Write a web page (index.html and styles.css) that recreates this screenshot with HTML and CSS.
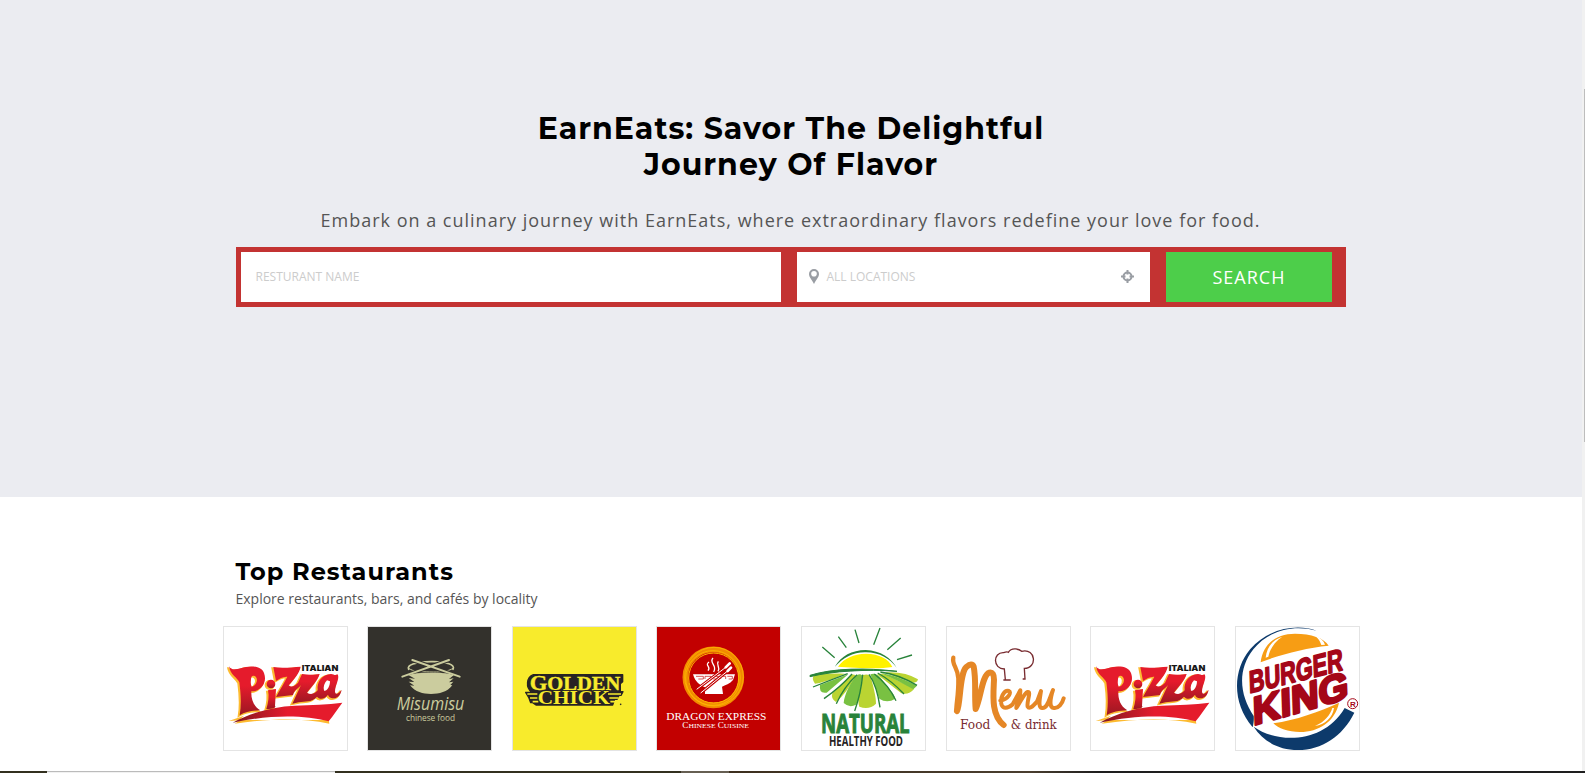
FILE: index.html
```
<!DOCTYPE html>
<html lang="en">
<head>
<meta charset="utf-8">
<title>EarnEats</title>
<link rel="stylesheet" href="styles.css">
</head>
<body>
<svg width="0" height="0" class="defs" aria-hidden="true">
  <defs>
    <linearGradient id="red" x1="0" y1="0" x2="0" y2="1"><stop offset="0.4" stop-color="#e51b2c"/><stop offset="1" stop-color="#9b1722"/></linearGradient>
    <linearGradient id="swoosh" x1="0" y1="0" x2="1" y2="0"><stop offset="0" stop-color="#7d1620"/><stop offset="0.5" stop-color="#e51b2c"/></linearGradient>
    <g id="pizza-shape">
      <path fill-rule="evenodd" d="M43 154C50 166 62 164 78 160C104 151 140 151 148 174C160 206 134 231 110 229C109 252 116 274 137 286C112 287 92 290 75 301C81 267 78 231 74 202C68 187 47 181 43 154ZM110 186C108 197 107 207 111 215C126 212 131 193 123 185C119 181 113 182 110 186Z"/>
      <path d="M160 226L184 222L181 272C186 278 176 281 155 282C161 262 164 244 160 226Z"/>
      <circle cx="169" cy="207" r="13"/>
      <path d="M176 156C202 161 230 157 258 155C254 175 240 190 222 211C230 218 240 214 250 203L262 177C283 181 301 179 315 177C309 197 290 216 277 233C288 240 300 237 309 226C306 199 323 178 349 177C358 178 361 183 369 178C376 192 361 211 361 230C363 241 371 237 381 224C377 244 366 252 350 249C344 247 341 243 340 239C330 254 314 254 307 245C290 264 272 257 252 262L233 266L259 210C252 220 239 224 235 240L184 246C195 225 209 204 218 185C205 184 195 191 184 198Z"/>
    </g>
    <symbol id="pizza" viewBox="28 36 369 369">
      <use href="#pizza-shape" fill="#fdbb30" stroke="#fdbb30" stroke-width="4" transform="translate(-4 3)"/>
      <path d="M42 318L88 302L75 315L342 315L344 326C260 308 170 310 60 326L76 316Z" fill="#fdbb30"/>
      <use href="#pizza-shape" fill="url(#red)"/>
      <path d="M54 323C110 292 176 275 240 272C290 269 338 270 383 263C369 281 356 302 342 319C270 300 170 298 54 323Z" fill="url(#swoosh)"/>
      <path d="M337 196C329 204 325 216 328 227C338 230 346 212 346 199Z" fill="#fff"/>
      <text x="261" y="168" class="heavy" font-size="22" textLength="110" lengthAdjust="spacingAndGlyphs" fill="#181818">ITALIAN</text>
    </symbol>
  </defs>
</svg>

<section class="hero">
  <h1 class="hero-title">EarnEats: Savor The Delightful<br>Journey Of Flavor</h1>
  <p class="hero-text">Embark on a culinary journey with EarnEats, where extraordinary flavors redefine your love for food.</p>
  <form class="search">
    <div class="field field-name">RESTURANT NAME</div>
    <div class="field field-location">
      <svg class="pin" viewBox="0 0 10 15"><path fill-rule="evenodd" d="M5 0A5 5 0 0 1 10 5C10 8 7.500 10 5 15C2.500 10 0 8 0 5A5 5 0 0 1 5 0ZM5 2A2.800 2.800 0 1 0 5 7.600A2.800 2.800 0 0 0 5 2Z"/></svg>
      <span class="location-text">ALL LOCATIONS</span>
      <svg class="target" viewBox="0 0 13 13"><circle cx="6.500" cy="6.500" r="4" fill="none" stroke="#999da3" stroke-width="2"/><path d="M5.500 0H7.500V4.500H5.500ZM5.500 8.500H7.500V13H5.500ZM0 5.500H4.500V7.500H0ZM8.500 5.500H13V7.500H8.500Z"/></svg>
    </div>
    <button type="button" class="search-button">SEARCH</button>
  </form>
</section>

<section class="restaurants">
  <h2 class="section-title">Top Restaurants</h2>
  <p class="section-text">Explore restaurants, bars, and cafés by locality</p>
  <div class="cards">
    <div class="card"><svg class="logo"><use href="#pizza"/></svg></div>

    <div class="card dark"><svg class="logo" viewBox="461 36 369 369">
      <g fill="none" stroke="#cbcc9e" stroke-width="4" stroke-linecap="round">
        <path d="M583 163C576 150 602 141 650 140S724 150 716 163" stroke-width="5"/>
        <path d="M583 160C598 171 617 170 646 171S702 170 716 160" stroke-width="3"/>
        <path d="M564 185L704 135M736 185L594 135" stroke="#33312c" stroke-width="12"/>
        <path d="M564 185L704 135M736 185L594 135" stroke-width="6"/>
      </g>
      <path d="M582 180C605 173 625 174 650 174S700 173 718 181L704 192L718 190L704 202L717 200L708 210L714 211C699 231 675 237 650 237S603 231 587 211L600 212L583 200L600 201L583 189L602 191Z" fill="#cbcc9e"/>
      <text x="547" y="285" class="hand" font-size="54" textLength="203" lengthAdjust="spacingAndGlyphs" fill="#cbcc9e">Misumisu</text>
      <text x="575" y="318" class="hand-small" font-size="25" textLength="147" fill="#cbcc9e">chinese food</text>
    </svg></div>

    <div class="card yellow"><svg class="logo" viewBox="25 36 369 369">
      <path d="M86 179H354V200L347 206V230H355L349 241H343L337 253H330L324 270H94L84 263H78L72 247L63 232H82C61 218 66 186 86 179Z" fill="#272324" stroke="#272324" stroke-width="4" stroke-linejoin="round"/>
      <g stroke="#f8eb2c" stroke-width="5"><path d="M68 237H98M76 249H98M84 260H101M310 237H349M314 249H342M317 260H334"/></g>
      <text x="75" y="224" class="serif" font-size="62" textLength="272" lengthAdjust="spacingAndGlyphs" fill="#f8eb2c" stroke="#f8eb2c">G<tspan font-size="56">OLDEN</tspan></text>
      <text x="99" y="267" class="serif" font-size="57" textLength="216" lengthAdjust="spacingAndGlyphs" fill="#f8eb2c" stroke="#272324" stroke-width="5" paint-order="stroke">CHICK</text>
      <circle cx="348" cy="268" r="2.500" fill="#272324"/>
    </svg></div>

    <div class="card crimson"><svg class="logo" viewBox="458 36 369 369">
      <g fill="none" stroke="#f18a00"><circle cx="627" cy="187" r="84" stroke-width="17"/><g stroke="#ffc000" stroke-width="2"><circle cx="629" cy="185" r="88"/><circle cx="626" cy="189" r="82"/></g><circle cx="628" cy="189" r="75" stroke="#ffb900" stroke-width="3"/></g>
      <path d="M566 178H692L686 195C677 206 662 211 653 215L656 237H602V217C587 211 573 202 566 178Z" fill="#fff"/>
      <path d="M575 184H597V192H582M602 192V184H620V192M626 184H642V192H627M649 192V184H664V192M669 184H684V192H673" fill="none" stroke="#c20000" stroke-width="2"/>
      <path d="M577 223L680 145M589 234L682 158" stroke="#c20000" stroke-width="9"/>
      <path d="M577 223L680 145M589 234L682 158" stroke="#fff" stroke-width="3"/>
      <path d="M664 157L676 145M670 168L680 158" stroke="#fff" stroke-width="8" stroke-linecap="round"/>
      <path d="M614 141C599 152 622 154 611 167M626 129C612 143 641 151 628 171M642 139C633 151 650 155 641 169" fill="none" stroke="#fff" stroke-width="4"/>
      <text x="486" y="315" class="roman" font-size="34" textLength="300" lengthAdjust="spacingAndGlyphs" fill="#fff">DRAGON EXPRESS</text>
      <text x="534" y="340" class="roman" font-size="25" textLength="200" lengthAdjust="spacingAndGlyphs" fill="#fff">C<tspan font-size="21">HINESE </tspan>C<tspan font-size="21">UISINE</tspan></text>
    </svg></div>

    <div class="card"><svg class="logo" viewBox="21 36 369 369">
      <g fill="none" stroke="#28833a" stroke-width="4"><path d="M82 96L119 128M130 65L154 98M180 44L192 84M255 39L236 89M317 69L277 104M351 120L306 134"/></g>
      <path d="M129 155C148 129 175 117 213 116C253 117 281 131 292 156C244 164 174 157 129 155Z" fill="#fff200"/>
      <path d="M119 156C139 122 170 106 212 105C257 107 289 129 305 158C286 132 254 112 213 112C174 111 145 128 119 156Z" fill="#28833a"/>
      <path d="M58 180Q100 175 150 176Q95 201 60 206Q48 190 58 180ZM170 178L182 180Q155 236 123 261Q107 252 112 235ZM204 180Q222 174 228 188C238 225 243 246 243 266Q222 286 193 275C186 256 195 215 204 180ZM246 178Q265 172 285 186C315 200 345 214 357 222Q343 240 319 235ZM268 172Q330 168 369 193Q366 206 350 202Q305 188 268 172Z" fill="#bad432"/>
      <path d="M75 210L160 178L95 233Q71 237 75 210ZM185 180Q202 174 202 186C194 230 198 250 183 269Q163 280 146 264C148 238 168 200 185 180ZM226 178Q245 172 258 190C281 220 299 239 301 251Q276 266 253 251ZM258 174Q306 181 366 212L355 223Q306 195 258 174Z" fill="#79c142"/>
      <path d="M45 181C115 159 213 158 306 169C213 162 115 168 45 185Z" fill="#28833a" stroke="#28833a" stroke-width="3"/>
      <path d="M54 216Q110 194 158 176M87 251Q136 217 171 177M124 266Q147 215 186 179M179 288Q198 235 203 179M255 277Q246 212 222 178M303 257Q281 210 238 177M327 237Q291 198 248 174M366 211Q311 178 256 171" fill="none" stroke="#28833a" stroke-width="4"/>
      <text x="78" y="353" class="condensed" font-size="79" textLength="266" lengthAdjust="spacingAndGlyphs" fill="#28833a" stroke="#28833a" stroke-width="3">NATURAL</text>
      <text x="102" y="392" class="condensed" font-size="43" textLength="222" lengthAdjust="spacingAndGlyphs" fill="#272324">HEALTHY FOOD</text>
    </svg></div>

    <div class="card"><svg class="logo" viewBox="456 36 369 369">
      <path d="M625 195H647M683 192H692M631 194L628 162C593 162 593 111 626 113Q636 109 640 112C648 99 670 99 680 109C724 99 727 160 688 160L690 192" fill="none" stroke="#792c31" stroke-width="4"/>
      <g fill="none" stroke="#e58726" stroke-linecap="round" stroke-linejoin="round">
        <path d="M475 128C470 150 489 158 490 190C491 240 483 268 484 288" stroke-width="13"/>
        <path d="M486 288C497 268 493 176 514 156Q531 142 536 155C544 193 538 237 542 282C558 249 561 180 583 173Q597 170 597 194C595 240 588 300 626 330" stroke-width="18"/>
        <path d="M616 257C641 253 650 231 642 228C627 224 613 250 620 270Q628 288 653 268L676 226C677 249 663 270 664 279C676 261 687 235 698 231C710 229 694 260 698 275Q704 286 726 260L738 228C735 249 728 278 741 279C759 281 763 249 774 225C765 253 762 278 777 279C790 281 802 266 806 250" stroke-width="12"/>
      </g>
      <text x="495" y="341" class="georgia" font-size="37" textLength="91" lengthAdjust="spacingAndGlyphs" fill="#792c31">Food</text>
      <text x="647" y="341" class="georgia" font-size="37" textLength="138" lengthAdjust="spacingAndGlyphs" fill="#792c31">&amp; drink</text>
    </svg></div>

    <div class="card"><svg class="logo"><use href="#pizza"/></svg></div>

    <div class="card"><svg class="logo" viewBox="468 36 369 369">
      <path d="M710 47C650 25 565 40 511 102C458 164 455 264 518 337C521 323 522 314 521 303C480 242 470 166 520 103C567 45 641 28 710 47Z" fill="#0d3a6b"/>
      <path d="M521 335C586 383 728 391 794 279L823 293C788 364 725 405 654 405C593 405 549 378 521 335Z" fill="#0d3a6b"/>
      <path d="M542 142C549 86 590 56 645 56C693 56 733 69 746 92C677 99 605 117 542 142ZM580 325C648 315 716 291 777 263C765 320 716 351 660 351C625 351 594 340 580 325Z" fill="#f79d14"/>
      <path d="M557 128C560 96 580 73 607 65C584 80 570 101 565 125ZM705 62Q728 69 735 89L724 90Q719 73 705 62ZM705 333C735 320 750 301 757 279L762 279C758 308 735 329 705 333Z" fill="#fff"/>
      <g fill="#a50718" stroke="#a50718" stroke-linejoin="round">
        <text transform="translate(508 235) rotate(-14) skewX(-12)" class="king" font-size="91" stroke-width="5" textLength="290" lengthAdjust="spacingAndGlyphs">BURGER</text>
        <text transform="translate(520 331) rotate(-16) skewX(-14)" class="king" font-size="114" stroke-width="8" textLength="298" lengthAdjust="spacingAndGlyphs">KING</text>
      </g>
      <circle cx="818" cy="266" r="15" fill="none" stroke="#a50718" stroke-width="3"/>
      <text x="810" y="275" class="king" font-size="24" fill="#a50718">R</text>
    </svg></div>
  </div>
</section>

<div class="scroll-track"><div class="scroll-thumb"></div></div>
<div class="bottom-strip"><div class="strip-light"></div><div class="strip-gray"></div><div class="strip-end"></div></div>
</body>
</html>
```
FILE: styles.css
```
* { box-sizing: border-box; }
body { margin: 0; height: 773px; overflow: hidden; position: relative; background: #fff; font-family: "Open Sans", "Noto Sans", sans-serif; color: #555; }
.defs { position: absolute; }
.hero { height: 497px; padding: 111px 0 0 236px; background: #ebecf1; }
.hero-title { width: 1110px; margin: 0; text-align: center; color: #000; font: 700 30px/36px Montserrat, Inter, sans-serif; letter-spacing: 1px; }
.hero-text { width: 1109px; margin: 22px 0 0; text-align: center; font-size: 18px; line-height: 30px; letter-spacing: 1px; white-space: nowrap; }
.search { display: flex; width: 1110px; height: 60px; margin: 12px 0 0; padding: 5px 14px 5px 5px; background: #c33332; }
.field { display: flex; align-items: center; height: 50px; background: #fff; color: #ccc; font-size: 12px; padding: 0 14.5px 2px; }
.field-name { width: 540px; }
.field-location { width: 353px; margin: 0 16px; padding: 0 16px 2px 12px; }
.pin { width: 10px; height: 15px; fill: #999da3; }
.location-text { margin-left: 7.5px; }
.target { width: 13px; height: 13px; margin-left: auto; fill: #999da3; }
.search-button { flex: 1; border: 0; padding: 0; background: #4dce4a; color: #fff; font: 18px/50px "Open Sans", sans-serif; letter-spacing: 1px; }
.restaurants { padding: 60px 0 0 222.8px; }
.section-title { margin: 0 0 0 12.7px; color: #000; font: 700 24px/30px Montserrat, Inter, sans-serif; letter-spacing: 1px; }
.section-text { margin: 1px 0 17px 12.7px; font-size: 14px; line-height: 21px; }
.cards { display: flex; gap: 19.55px; }
.card { width: 125px; height: 125px; flex: none; border: 1px solid #e4e4e4; background: #fff; }
.dark { background: #33312c; }
.yellow { background: #f8eb2c; }
.crimson { background: #c20000; }
.logo { display: block; width: 100%; height: 100%; overflow: visible; }
.heavy { font-family: Inter, sans-serif; font-weight: 900; }
.hand { font-family: "Open Sans", sans-serif; font-style: italic; font-weight: 500; }
.hand-small { font-family: "Open Sans", sans-serif; font-weight: 500; }
.serif { font-family: "Liberation Serif", serif; font-weight: 700; }
.roman { font-family: "Liberation Serif", serif; }
.condensed { font-family: "Open Sans", sans-serif; font-weight: 700; }
.georgia { font-family: "DejaVu Serif", serif; }
.king { font-family: "Liberation Sans", sans-serif; font-weight: 700; }
.scroll-track { position: absolute; right: 0; top: 0; width: 3px; height: 771px; padding: 89px 0 0 2px; background: #f1f1f1; }
.scroll-thumb { height: 353px; background: #bdbdbd; }
.bottom-strip { position: absolute; left: 0; top: 771px; width: 1585px; height: 2px; display: flex; padding-left: 47px; background: #33301f; }
.strip-light { width: 288px; background: #f1f1f1; border-top: 1px solid #bbb; }
.strip-gray { width: 48px; margin-left: 346px; background: #665f52; }
.strip-end { flex: 1; background: linear-gradient(90deg, #3d2f1e 0, #4a3e2f 300px, #1e1e1e 370px); }
```
